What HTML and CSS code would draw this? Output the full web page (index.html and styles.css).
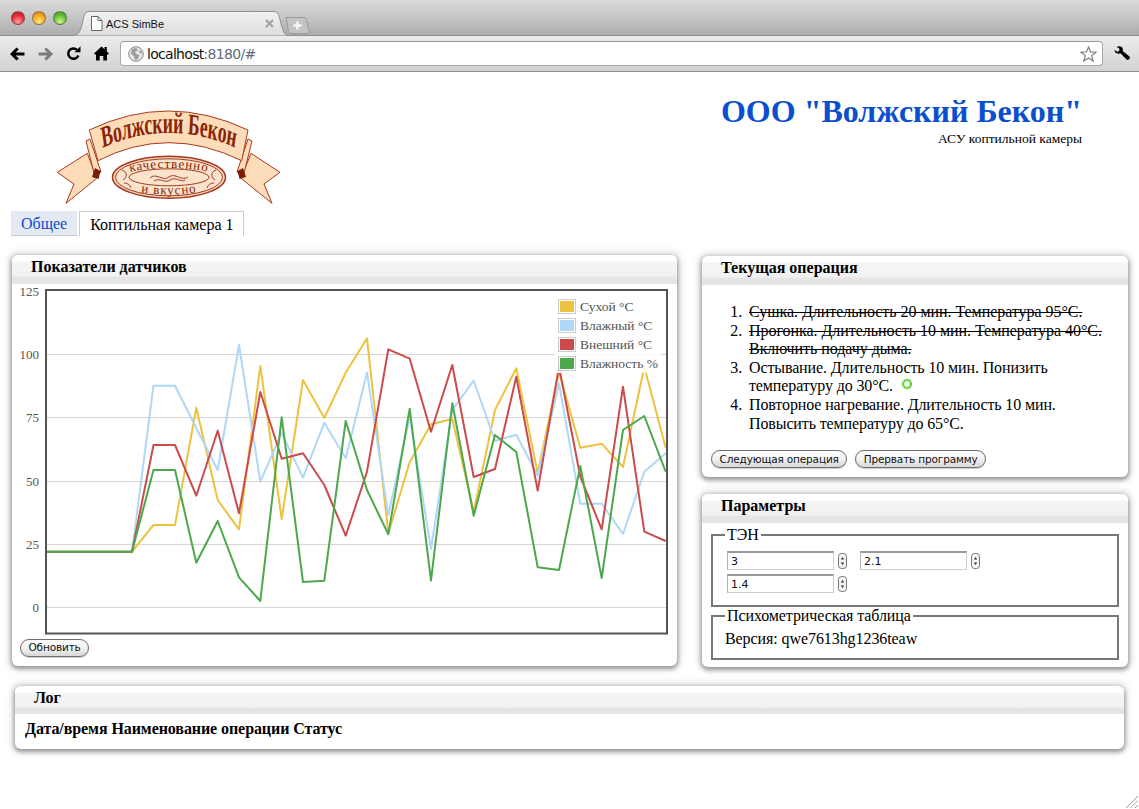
FILE: index.html
```html
<!DOCTYPE html>
<html lang="ru">
<head>
<meta charset="utf-8">
<title>ACS SimBe</title>
<link rel="stylesheet" href="styles.css">
</head>
<body>
<div class="tabstrip">
  <div class="lights">
    <span class="light red"></span><span class="light amber"></span><span class="light green"></span>
  </div>
  <div class="btab">
    <svg class="btab-shape" width="216" height="25" viewBox="0 0 216 25"><path d="M0 24.500C6 24.500 8 21 9.500 16L11.500 7C12.500 3 14 .5 17 .5H202C205 .5 206.500 3 207.500 7L210 16C211.500 21 213 24.500 216 24.500" fill="url(#tabg)" stroke="#8f8f8f"/><defs><linearGradient id="tabg" x1="0" y1="0" x2="0" y2="1"><stop offset="0" stop-color="#f2f2f2"/><stop offset="1" stop-color="#dcdcdc"/></linearGradient></defs></svg>
    <svg class="btab-doc" width="13" height="15" viewBox="0 0 13 15"><path d="M1.500.5H8L12 4.500V14.500H1.500Z" fill="#fff" stroke="#666"/><path d="M8 .5V4.500H12" fill="none" stroke="#666"/></svg>
    <span class="btab-title">ACS SimBe</span>
    <svg class="btab-close" width="9" height="9" viewBox="0 0 9 9"><path d="M1 1L8 8M8 1L1 8" stroke="#a5a5a5" stroke-width="2.400"/></svg>
  </div>
  <div class="newtab">
    <svg width="25" height="17" viewBox="0 0 25 17"><path d="M1 .5H19C20.500.5 21 1 21.500 2.500L24 14C24.300 15.500 23.500 16.500 22 16.500H6C4.500 16.500 4 16 3.500 14.500Z" fill="#c4c4c4" stroke="#999"/><path d="M12.500 4.500V12.500M8.500 8.500H16.500" stroke="#f6f6f6" stroke-width="2.600"/></svg>
  </div>
</div>
<div class="toolbar">
  <svg class="tool tool-back" width="15" height="14" viewBox="0 0 15 14"><path d="M0 7L6.500 .5L8.800 2.500L5.600 5.500H14.500V8.500H5.600L8.800 11.500L6.500 13.500Z" fill="#000"/></svg>
  <svg class="tool tool-fwd" width="15" height="14" viewBox="0 0 15 14"><path d="M15 7L8.500 .5L6.200 2.500L9.400 5.500H.5V8.500H9.400L6.200 11.500L8.500 13.500Z" fill="#7b7b7b"/></svg>
  <svg class="tool tool-reload" width="15" height="15" viewBox="0 0 15 15"><path d="M12.300 9.500A5.200 5.200 0 1 1 11 3.800" fill="none" stroke="#000" stroke-width="2.500"/><path d="M8.500 6.300H14.500V.3Z" fill="#000"/></svg>
  <svg class="tool tool-home" width="15" height="15" viewBox="0 0 15 15"><path d="M0 7.500L7.500 .5L10.500 3.300V1H12.800V5.400L15 7.500L14 8.600H13V14.500H9.300V10H5.700V14.500H2V8.600H1Z" fill="#000"/></svg>
  <div class="omnibox">
    <svg class="globe" width="16" height="16" viewBox="0 0 16 16"><circle cx="8" cy="8" r="7.300" fill="#e6e6e6" stroke="#8a8a8a"/><path d="M4 3L8 2L10 4L7 6L8 8L11 9L10 13L7 14L6 10L3 8Z" fill="#9c9c9c"/><path d="M12 4L14 6L13 8L11 6Z" fill="#9c9c9c"/></svg>
    <span class="url">localhost<span class="url-dim">:8180/#</span></span>
    <svg class="star" width="17" height="16" viewBox="0 0 17 16"><path d="M8.500 1L10.500 5.900L16 6.200L11.700 9.600L13.200 15L8.500 12L3.800 15L5.300 9.600L1 6.200L6.500 5.900Z" fill="#fff" stroke="#808080" stroke-width="1.200"/></svg>
  </div>
  <svg class="tool tool-wrench" width="16" height="15" viewBox="0 0 16 15"><path d="M.5 4L3.500 5.800L5.300 4.800L5.300 2.600L2.600 .9C4.500-.2 7.200.1 8.300 1.800C9 2.900 9 4 8.700 5L15.500 10.500C16.200 11.200 16 12.300 15.300 13.100C14.500 14 13.300 14.200 12.600 13.500L6.400 7.300C5 7.900 3.200 7.800 1.900 6.800C.9 6 .4 5 .5 4Z" fill="#000"/></svg>
</div>

<header class="site-header">
  <svg class="logo" width="240" height="110" viewBox="50 100 240 110">
    <defs>
      <path id="arcTop" d="M9 163.400A436 436 0 0 1 329 163.400"/>
      <path id="ovalTop" d="M124 173Q169 163 214 173"/>
      <path id="ovalBottom" d="M130 190Q169 199 208 190"/>
    </defs>
    <path class="rib" d="M87.300 153.300L57.300 172.300L74 184L66 203.300L96.700 178.300Z"/>
    <path class="rib" d="M251 153.300L280 172.300L264 184L272 203.300L241 178.300Z"/>
    <path class="rib" d="M86 141L90 139L101 172L95 177Z"/>
    <path class="rib" d="M252 141L248 139L237 172L243 177Z"/>
    <path class="rib-dark" d="M95 168L100.500 171L98.500 179L92 177Z"/>
    <path class="rib-dark" d="M243 168L237.500 171L239.500 179L246 177Z"/>
    <path class="rib" d="M89.300 130Q168 92 248 130L241.700 160.700Q168 124.700 98 160.700Z"/>
    <g transform="translate(169 0) scale(.59 1) translate(-169 0)">
      <text class="logo-title"><textPath href="#arcTop" startOffset="50%" text-anchor="middle">Волжский Бекон</textPath></text>
    </g>
    <ellipse class="oval" cx="169" cy="177.300" rx="56.500" ry="21"/>
    <ellipse class="oval-in" cx="169" cy="177.300" rx="53.500" ry="18.500"/>
    <ellipse class="oval-in" cx="169" cy="177.300" rx="40" ry="8.500"/>
    <path class="flourish" d="M150 178C156 172 163 182 169 177C175 172 182 182 188 177M154 181C160 177 165 184 170 180C176 176 181 183 185 180"/>
    <path class="flourish" d="M122 170C128 172 127 178 123 180M216 170C210 172 211 178 215 180M124 183C128 183 130 185 131 188M214 183C210 183 208 185 207 188"/>
    <text class="logo-small"><textPath href="#ovalTop" startOffset="50%" text-anchor="middle">качественно</textPath></text>
    <text class="logo-small"><textPath href="#ovalBottom" startOffset="50%" text-anchor="middle">и вкусно</textPath></text>
  </svg>
  <div class="brand">
    <h1 class="brand-title">ООО "Волжский Бекон"</h1>
    <div class="brand-sub">АСУ коптильной камеры</div>
  </div>
</header>

<nav class="tabs">
  <a class="tab" href="#">Общее</a>
  <a class="tab tab-active" href="#">Коптильная камера 1</a>
</nav>

<main class="grid">
  <section class="panel panel-chart">
    <h2 class="panel-head">Показатели датчиков</h2>
    <div class="chart">
      <svg class="chart-svg" width="665" height="352" viewBox="12 284 665 352">
        <defs><clipPath id="plot"><rect x="47" y="291" width="619" height="342"/></clipPath></defs>
        <g class="grid-lines">
          <line x1="47" x2="666" y1="354.500" y2="354.500"/>
          <line x1="47" x2="666" y1="417.500" y2="417.500"/>
          <line x1="47" x2="666" y1="481.500" y2="481.500"/>
          <line x1="47" x2="666" y1="544.500" y2="544.500"/>
          <line x1="47" x2="666" y1="607.500" y2="607.500"/>
        </g>
        <g class="axis">
          <text x="39" y="296">125</text>
          <text x="39" y="359">100</text>
          <text x="39" y="422">75</text>
          <text x="39" y="486">50</text>
          <text x="39" y="549">25</text>
          <text x="39" y="612">0</text>
        </g>
        <g clip-path="url(#plot)">
          <polyline class="s s-dry" points="47,551.700 132,551.700 153.500,525 175,525 196.300,407.700 217.700,500 239,529.300 260.300,366 281.700,519 303,380 324.300,418 345.700,372.700 367,338.300 388.300,533.300 409.700,462.300 431,424.300 452.300,419 473.700,511.700 495,410 516.300,368.300 537.700,473.300 559,371.700 580.300,447.700 601.700,443.700 623,467 644.300,366.700 665.700,447.700"/>
          <polyline class="s s-wet" points="47,551.700 132,551.700 153.500,385.700 175,385.700 196.300,428 217.700,470 239,345 260.300,481.700 281.700,433 303,477.700 324.300,422.700 345.700,458.300 367,372.700 388.300,515 409.700,417 431,549 452.300,410 473.700,380.700 495,441 516.300,434.700 537.700,475.700 559,383.300 580.300,503.700 601.700,503.700 623,534 644.300,471.700 665.700,453.300"/>
          <polyline class="s s-ext" points="47,551.700 132,551.700 153.500,445 175,445 196.300,495.700 217.700,430.700 239,513.300 260.300,392 281.700,458.700 303,453.300 324.300,485 345.700,535.700 367,471.700 388.300,349.300 409.700,358.700 431,431.700 452.300,365 473.700,477 495,469 516.300,376.700 537.700,490.700 559,366.700 580.300,476.700 601.700,529.300 623,386.700 644.300,531.700 665.700,541"/>
          <polyline class="s s-hum" points="47,551.700 132,551.700 153.500,470 175,470 196.300,562.700 217.700,521 239,577.300 260.300,601 281.700,417.300 303,582 324.300,580.700 345.700,421 367,490 388.300,534.300 409.700,408.700 431,580.700 452.300,403.300 473.700,515.700 495,435 516.300,452 537.700,567.300 559,570 580.300,466 601.700,578 623,430 644.300,416 665.700,471.700"/>
        </g>
        <rect class="frame" x="46" y="290" width="621" height="343.500"/>
      </svg>
      <ul class="legend">
        <li class="legend-row"><span class="swatch"><i class="swatch-fill fill-dry"></i></span>Сухой °C</li>
        <li class="legend-row"><span class="swatch"><i class="swatch-fill fill-wet"></i></span>Влажный °C</li>
        <li class="legend-row"><span class="swatch"><i class="swatch-fill fill-ext"></i></span>Внешний °C</li>
        <li class="legend-row"><span class="swatch"><i class="swatch-fill fill-hum"></i></span>Влажность %</li>
      </ul>
    </div>
    <div class="chart-actions"><button class="btn" type="button">Обновить</button></div>
  </section>

  <div class="side">
    <section class="panel panel-op">
      <h2 class="panel-head">Текущая операция</h2>
      <ol class="ops">
        <li><s>Сушка. Длительность 20 мин. Температура 95°С.</s></li>
        <li><s>Прогонка. Длительность 10 мин. Температура 40°С. Включить подачу дыма.</s></li>
        <li>Остывание. Длительность 10 мин. Понизить температуру до 30°С.
          <svg class="spinner" width="12" height="12" viewBox="0 0 12 12"><circle cx="6" cy="6" r="4" fill="none" stroke="#55d62a" stroke-width="2.600" stroke-dasharray="2 .5"/></svg></li>
        <li>Повторное нагревание. Длительность 10 мин. Повысить температуру до 65°С.</li>
      </ol>
      <div class="op-actions">
        <button class="btn" type="button">Следующая операция</button>
        <button class="btn" type="button">Прервать программу</button>
      </div>
    </section>

    <section class="panel panel-params">
      <h2 class="panel-head">Параметры</h2>
      <fieldset class="group group-ten">
        <legend class="group-title">ТЭН</legend>
        <div class="fields">
          <span class="field"><input class="num" type="text" value="3"><svg class="spin" width="9" height="16" viewBox="0 0 9 16"><rect x=".5" y=".5" width="8" height="15" rx="3" fill="#f4f4f4" stroke="#777"/><path d="M2.800 6.500L4.500 4L6.200 6.500ZM2.800 9.500L4.500 12L6.200 9.500Z" fill="#333"/></svg></span>
          <span class="field"><input class="num" type="text" value="2.1"><svg class="spin" width="9" height="16" viewBox="0 0 9 16"><rect x=".5" y=".5" width="8" height="15" rx="3" fill="#f4f4f4" stroke="#777"/><path d="M2.800 6.500L4.500 4L6.200 6.500ZM2.800 9.500L4.500 12L6.200 9.500Z" fill="#333"/></svg></span>
          <span class="field"><input class="num" type="text" value="1.4"><svg class="spin" width="9" height="16" viewBox="0 0 9 16"><rect x=".5" y=".5" width="8" height="15" rx="3" fill="#f4f4f4" stroke="#777"/><path d="M2.800 6.500L4.500 4L6.200 6.500ZM2.800 9.500L4.500 12L6.200 9.500Z" fill="#333"/></svg></span>
        </div>
      </fieldset>
      <fieldset class="group group-table">
        <legend class="group-title">Психометрическая таблица</legend>
        <div class="version">Версия: qwe7613hg1236teaw</div>
      </fieldset>
    </section>
  </div>
</main>

<section class="panel panel-log">
  <h2 class="panel-head panel-head-log">Лог</h2>
  <div class="log-cols"><b>Дата/время</b> <b>Наименование операции</b> <b>Статус</b></div>
</section>

<svg class="resize" width="13" height="13" viewBox="0 0 13 13"><path d="M13 1L1 13M13 5.500L5.500 13M13 10L10 13" stroke="#9a9a9a" fill="none"/><path d="M13 2L2 13M13 6.500L6.500 13M13 11L11 13" stroke="#fff" fill="none"/></svg>
</body>
</html>
```

FILE: styles.css
```css
* { box-sizing: border-box; }
html, body { margin: 0; padding: 0; }
body {
  position: relative;
  width: 1139px;
  height: 809px;
  overflow: hidden;
  background: #fff;
  color: #000;
  font-family: "Liberation Serif", "Times New Roman", serif;
  font-size: 16px;
}

/* browser chrome */
.tabstrip {
  display: flex;
  align-items: flex-start;
  height: 36px;
  background: linear-gradient(#dadada, #c6c6c6 50%, #acacac);
  border-bottom: 1px solid #8c8c8c;
}
.lights { display: flex; gap: 7px; padding: 11px 0 0 11px; width: 72px; flex: none; }
.light { width: 14px; height: 14px; border-radius: 50%; border: 1px solid rgba(80, 80, 80, .55); }
.red { background: radial-gradient(circle at 50% 80%, #ffa0a0, #ea2a38 55%, #b01828); }
.amber { background: radial-gradient(circle at 50% 80%, #ffe880, #f8a820 55%, #c07814); }
.green { background: radial-gradient(circle at 50% 80%, #d0f590, #66c038 55%, #3a8a20); }
.btab {
  position: relative;
  display: flex;
  align-items: center;
  width: 208px;
  height: 25px;
  margin-top: 11px;
  flex: none;
}
.btab-shape { position: absolute; left: 0; top: 0; }
.btab-doc { position: relative; margin-left: 18px; flex: none; }
.btab-title {
  position: relative;
  margin-left: 3px;
  font: 11px "Liberation Sans", Arial, sans-serif;
  color: #111;
}
.btab-close { position: relative; margin-left: 101px; flex: none; }
.newtab { margin: 17px 0 0 5px; height: 17px; }
.newtab svg { display: block; }

.toolbar {
  display: flex;
  align-items: center;
  height: 36px;
  padding-left: 10px;
  background: linear-gradient(#ececec, #d2d2d2);
  border-bottom: 1px solid #8e8e8e;
}
.tool { flex: none; display: block; }
.tool-fwd, .tool-reload, .tool-home { margin-left: 13px; }
.omnibox {
  display: flex;
  align-items: center;
  width: 983px;
  height: 25px;
  margin: 0 11px 0 11px;
  padding: 0 5px 0 7px;
  background: #fff;
  border: 1px solid #a9a9a9;
  border-top-color: #999;
  border-radius: 4px;
  flex: none;
}
.globe { flex: none; }
.url {
  margin-left: 3px;
  flex: 1;
  font: 14px "DejaVu Sans", Verdana, sans-serif;
  letter-spacing: -.7px;
  color: #111;
}
.url-dim { color: #5f6b78; }
.star { flex: none; }

/* site header */
.site-header {
  display: flex;
  justify-content: space-between;
  height: 139px;
  padding: 28px 57px 0 50px;
}
.logo { display: block; flex: none; }
.rib { fill: #fddcb9; stroke: #a8391c; stroke-width: 1; }
.rib-dark { fill: #7d1c08; }
.oval { fill: #f8d6b6; stroke: #a23a22; stroke-width: 1.500; }
.oval-in { fill: #fbe3cc; stroke: #a23a22; stroke-width: 1; }
.flourish { fill: none; stroke: #a23a22; stroke-width: 1; }
.logo-title {
  font: bold 30px "Liberation Serif", serif;
  fill: #8a2407;
}
.logo-small {
  font: 13px "Liberation Serif", serif;
  letter-spacing: 1px;
  fill: #8a2407;
}
.brand { margin-top: -7px; text-align: right; }
.brand-title {
  margin: 0;
  font-size: 32px;
  line-height: 37px;
  font-weight: bold;
  color: #0b4fd0;
}
.brand-sub { font-size: 13.500px; line-height: 15px; margin-top: 1px; }

/* tabs */
.tabs { display: flex; gap: 2px; height: 25px; padding-left: 11px; }
.tab {
  display: block;
  height: 25px;
  padding: 3px 10px 0;
  line-height: 20px;
  font-size: 16px;
  white-space: nowrap;
  text-decoration: none;
  color: #0b4fd0;
  background: #e4e9f3;
  border-bottom: 1px solid #ccc;
}
.tab-active {
  color: #000;
  background: #fff;
  border: 1px solid #ccc;
  border-bottom: 0;
  width: 165px;
}

/* layout */
.grid {
  display: grid;
  grid-template-columns: 665px 426px;
  column-gap: 25px;
  padding: 19px 0 0 12px;
}
.side { display: flex; flex-direction: column; gap: 17px; padding-top: 1px; }
.panel {
  background: #fff;
  border-radius: 6px;
  box-shadow: 0 2px 4px 1px rgba(0, 0, 0, .35), 0 0 6px 4px rgba(0, 0, 0, .1);
  overflow: hidden;
}
.panel-head {
  margin: 0;
  height: 29px;
  padding: 3px 0 0 19px;
  font-size: 16px;
  line-height: 18px;
  font-weight: bold;
  background: linear-gradient(#fff 0, #fff 6px, #f5f5f5 7px, #f2f2f2 21px, #e6e6e6 22px, #e4e4e4 100%);
}
.panel-chart { height: 411px; }
.chart { position: relative; height: 352px; }
.chart-svg { display: block; }
.grid-lines line { stroke: #d6d6d6; stroke-width: 1; }
.axis text {
  font: 13px "Liberation Serif", serif;
  fill: #545454;
  text-anchor: end;
}
.s { fill: none; stroke-width: 2; stroke-linejoin: round; }
.s-dry { stroke: #edc240; }
.s-wet { stroke: #afd8f8; }
.s-ext { stroke: #cb4b4b; }
.s-hum { stroke: #4da74d; }
.frame { fill: none; stroke: #545454; stroke-width: 2; }
.legend {
  position: absolute;
  left: 543px;
  top: 11px;
  width: 106px;
  margin: 0;
  padding: 2px 0 0 3px;
  list-style: none;
  background: rgba(255, 255, 255, .85);
}
.legend-row {
  display: flex;
  align-items: center;
  height: 19px;
  font-size: 13.500px;
  white-space: nowrap;
  color: #545454;
}
.swatch {
  display: block;
  width: 18px;
  height: 15px;
  margin-right: 4px;
  padding: 1px;
  border: 1px solid #ccc;
  flex: none;
}
.swatch-fill { display: block; width: 100%; height: 100%; }
.fill-dry { background: #edc240; }
.fill-wet { background: #afd8f8; }
.fill-ext { background: #cb4b4b; }
.fill-hum { background: #4da74d; }
.chart-actions { padding: 1px 0 0 8px; }

.btn {
  display: inline-block;
  height: 18px;
  margin: 0;
  padding: 0 7.500px;
  border: 1px solid #6e6e6e;
  border-radius: 9px;
  background: linear-gradient(#fdfdfd, #f2f2f2 50%, #d8d8d8);
  box-shadow: 0 1px 1px rgba(0, 0, 0, .2);
  font: 10.500px "DejaVu Sans", Verdana, sans-serif;
  letter-spacing: -.15px;
  line-height: 15px;
  color: #111;
}

.panel-op { height: 221px; }
.ops {
  margin: 0;
  padding: 18px 15px 0 47px;
  font-size: 16px;
  letter-spacing: -.12px;
  line-height: 18.600px;
  height: 165px;
}
.ops s { letter-spacing: -.045px; }
.ops li::marker { content: counter(list-item) ".\00a0\2009"; }
.spinner { margin-left: 4px; vertical-align: 1px; }
.op-actions { display: flex; gap: 8px; padding: 0 0 0 9px; }

.panel-params { height: 173px; padding: 0 9px; }
.panel-params .panel-head { margin: 0 -9px; }
.group {
  margin: 0;
  padding: 0;
  border: 2px solid #777;
  min-width: 0;
}
.group-title {
  margin-left: 12px;
  padding: 0 2px;
  font-size: 16px;
  line-height: 16px;
  letter-spacing: -.1px;
}
.group-ten { height: 80px; margin-top: 4px; }
.group-table { height: 52px; margin-top: 1px; }
.fields { display: flex; flex-wrap: wrap; row-gap: 4px; padding: 8px 0 0 14px; }
.field { display: flex; align-items: center; width: 133px; }
.num {
  width: 107px;
  height: 19px;
  padding: 0 0 0 3px;
  border: 1px solid #cfcfcf;
  border-top: 2px solid #9a9a9a;
  border-left-color: #b5b5b5;
  font: 11px "DejaVu Sans", Verdana, sans-serif;
  color: #111;
  background: #fff;
}
.spin { margin-left: 4px; flex: none; }
.version { padding: 5px 0 0 12px; line-height: 19px; letter-spacing: -.08px; }

.panel-log {
  width: 1109px;
  height: 63px;
  margin: 19px 0 0 15px;
}
.panel-head-log { height: 28px; }
.log-cols { padding: 6px 0 0 10px; line-height: 18px; letter-spacing: -.08px; }

.resize { position: absolute; right: 1px; bottom: 1px; }
```
